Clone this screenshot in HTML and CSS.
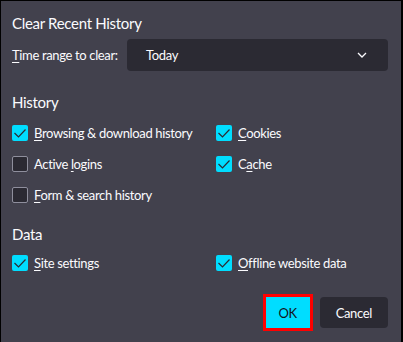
FILE: index.html
```html
<!DOCTYPE html>
<html lang="en">
<head>
    <meta charset="UTF-8">
    <title>Clear Recent History</title>
    <link rel="stylesheet" href="styles.css">
</head>
<body>
    <div class="dialog">
        <h1 class="title">Clear Recent History</h1>

        <div class="range-row">
            <span class="label"><u>T</u>ime range to clear:</span>
            <div class="select">
                <span>Today</span>
                <svg class="chevron" width="12" height="8" viewBox="0 0 12 8">
                    <path d="M2 2 L6 6 L10 2" fill="none" stroke="#fbfbfe" stroke-width="1.3"/>
                </svg>
            </div>
        </div>

        <h2 class="section">History</h2>
        <div class="options">
            <label class="option"><span class="box checked"></span><span><u>B</u>rowsing &amp; download history</span></label>
            <label class="option"><span class="box checked"></span><span><u>C</u>ookies</span></label>
            <label class="option"><span class="box"></span><span>Active <u>l</u>ogins</span></label>
            <label class="option"><span class="box checked"></span><span>C<u>a</u>che</span></label>
            <label class="option"><span class="box"></span><span><u>F</u>orm &amp; search history</span></label>
        </div>

        <h2 class="section data">Data</h2>
        <div class="options">
            <label class="option"><span class="box checked"></span><span><u>S</u>ite settings</span></label>
            <label class="option"><span class="box checked"></span><span><u>O</u>ffline website data</span></label>
        </div>

        <div class="buttons">
            <button class="btn primary">OK</button>
            <button class="btn">Cancel</button>
        </div>
    </div>
</body>
</html>
```

FILE: styles.css
```css
:root {
    --bg: #42414d;
    --field: #2b2a33;
    --text: #fbfbfe;
    --accent: #00ddff;
}

body {
    margin: 0;
    font-family: 'Lato', sans-serif;
    font-size: 13px;
    letter-spacing: -0.35px;
    color: var(--text);
}

.dialog {
    width: 376px;
    height: 339px;
    background: var(--bg);
    border-style: solid;
    border-color: #000;
    border-width: 1px 2px 2px 1px;
    padding: 12px 13px 0 11px;
    white-space: nowrap;
}

u {
    text-decoration-thickness: 1px;
    text-underline-offset: 2px;
}

.title {
    font-size: 15px;
    font-weight: normal;
    letter-spacing: -0.3px;
    margin: 0;
    line-height: 20px;
}

.range-row {
    display: flex;
    align-items: center;
    margin-top: 6px;
}

.label {
    width: 115px;
}

.select {
    flex: 1;
    height: 32px;
    background: var(--field);
    border-radius: 4px;
    display: flex;
    align-items: center;
    justify-content: space-between;
    padding: 0 20px 0 19px;
}

.section {
    font-size: 15px;
    font-weight: normal;
    letter-spacing: -0.3px;
    margin: 21px 0 5px;
    line-height: 20px;
}

.section.data {
    margin-top: 14px;
    margin-bottom: 3px;
}

.options {
    display: grid;
    grid-template-columns: 204px 1fr;
    grid-auto-rows: 31px;
}

.option {
    display: flex;
    align-items: center;
    gap: 6px;
}

.box {
    width: 14px;
    height: 14px;
    border: 1px solid #8f8f9d;
    border-radius: 2px;
    background: var(--field);
}

.box.checked {
    width: 16px;
    height: 16px;
    border: none;
    background: var(--accent) url("data:image/svg+xml,%3Csvg xmlns='http://www.w3.org/2000/svg' width='16' height='16'%3E%3Cpath d='M2.5 8 L6.5 12 L13.5 4.5' fill='none' stroke='%232b2a33' stroke-width='1.2'/%3E%3C/svg%3E") no-repeat;
}

.buttons {
    display: flex;
    justify-content: flex-end;
    gap: 10px;
    margin-top: 19px;
}

.btn {
    height: 31px;
    padding: 0 16px;
    border: none;
    border-radius: 4px;
    background: var(--field);
    color: var(--text);
    font-family: inherit;
    font-size: 13px;
    letter-spacing: inherit;
}

.btn.primary {
    width: 44px;
    padding: 0;
    border-radius: 0;
    background: var(--accent);
    color: #15141a;
    outline: 3px solid #ff0000;
}
```
